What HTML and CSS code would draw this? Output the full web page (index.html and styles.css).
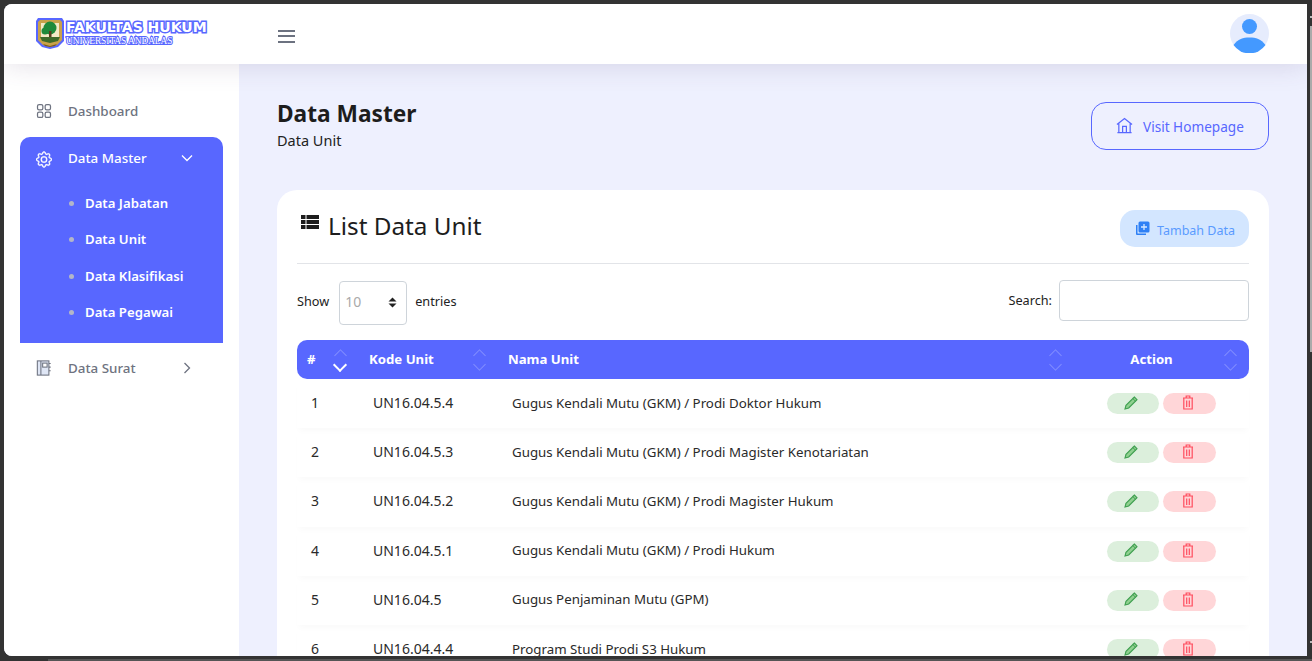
FILE: index.html
```html
<!DOCTYPE html>
<html lang="en">
<head>
    <meta charset="UTF-8">
    <meta name="viewport" content="width=device-width, initial-scale=1.0">
    <title>Data Unit</title>
    <link rel="stylesheet" href="styles.css">
</head>
<body>
    <div class="window">
        <header class="topbar">
            <div class="logo">
                <svg class="emblem" width="30" height="34" viewBox="0 0 30 34">
                    <path d="M3 2h24l2 3v20l-6 6-8 2-8-2-6-6V5z" fill="#5867ff"/>
                    <path d="M5 4h20l2 2v18l-5 5-7 2-7-2-5-5V6z" fill="#c9a24a"/>
                    <path d="M6 7h18v15H6z" fill="#f3e9c6"/>
                    <circle cx="15" cy="12" r="6.5" fill="#1f8a3a"/>
                    <circle cx="10" cy="15" r="3.5" fill="#1f8a3a"/>
                    <rect x="14" y="15" width="2.5" height="7" fill="#5a3d1e"/>
                    <path d="M5 21h20l-2 4-8 2-8-2z" fill="#3f6b2a"/>
                    <path d="M8 28l7 2 7-2-2 2-5 1-5-1z" fill="#7a5a20"/>
                </svg>
                <div class="logo-text">
                    <span class="logo-title">FAKULTAS HUKUM</span>
                    <span class="logo-sub">UNIVERSITAS ANDALAS</span>
                </div>
            </div>
            <button class="burger" aria-label="menu"><span></span><span></span><span></span></button>
            <div class="avatar">
                <svg width="39" height="39" viewBox="0 0 39 39">
                    <circle cx="19.5" cy="19.5" r="19.5" fill="#e6ecfd"/>
                    <circle cx="19.5" cy="12.5" r="7.5" fill="#4499ff"/>
                    <path d="M3.5 31C8 25 13 23.500 19.500 23.500S31 25 35.500 31A19.500 19.500 0 0 1 3.500 31z" fill="#4499ff"/>
                </svg>
            </div>
        </header>
        <div class="body-row">
            <aside class="sidebar">
                <a class="nav-item">
                    <svg class="nav-icon" width="18" height="18" viewBox="0 0 18 18" fill="none" stroke="#6e7380" stroke-width="1.4">
                        <rect x="1.700" y="1.700" width="6" height="6" rx="1.800"/><rect x="10.300" y="1.700" width="6" height="6" rx="1.800"/>
                        <rect x="1.700" y="10.300" width="6" height="6" rx="1.800"/><rect x="10.300" y="10.300" width="6" height="6" rx="1.800"/>
                    </svg>
                    <span>Dashboard</span>
                </a>
                <div class="nav-group">
                    <a class="nav-item active">
                        <svg class="nav-icon gear" width="17" height="17" viewBox="0 0 16 16" fill="#fff" stroke="#fff" stroke-width="0.35">
                            <path d="M8 4.754a3.246 3.246 0 1 0 0 6.492 3.246 3.246 0 0 0 0-6.492zM5.754 8a2.246 2.246 0 1 1 4.492 0 2.246 2.246 0 0 1-4.492 0z"/>
                            <path d="M9.796 1.343c-.527-1.790-3.065-1.790-3.592 0l-.094.319a.873.873 0 0 1-1.255.52l-.292-.16c-1.640-.892-3.433.902-2.540 2.541l.159.292a.873.873 0 0 1-.52 1.255l-.319.094c-1.790.527-1.790 3.065 0 3.592l.319.094a.873.873 0 0 1 .52 1.255l-.16.292c-.892 1.640.901 3.434 2.541 2.540l.292-.159a.873.873 0 0 1 1.255.52l.094.319c.527 1.790 3.065 1.790 3.592 0l.094-.319a.873.873 0 0 1 1.255-.52l.292.16c1.640.893 3.434-.902 2.540-2.541l-.159-.292a.873.873 0 0 1 .52-1.255l.319-.094c1.790-.527 1.790-3.065 0-3.592l-.319-.094a.873.873 0 0 1-.52-1.255l.16-.292c.893-1.640-.902-3.433-2.541-2.540l-.292.159a.873.873 0 0 1-1.255-.52l-.094-.319zm-2.633.283c.246-.835 1.428-.835 1.674 0l.094.319a1.873 1.873 0 0 0 2.693 1.115l.291-.16c.764-.415 1.600.42 1.184 1.185l-.159.292a1.873 1.873 0 0 0 1.116 2.692l.318.094c.835.246.835 1.428 0 1.674l-.319.094a1.873 1.873 0 0 0-1.115 2.693l.16.291c.415.764-.42 1.600-1.185 1.184l-.291-.159a1.873 1.873 0 0 0-2.693 1.116l-.094.318c-.246.835-1.428.835-1.674 0l-.094-.319a1.873 1.873 0 0 0-2.692-1.115l-.292.16c-.764.415-1.600-.42-1.184-1.185l.159-.291A1.873 1.873 0 0 0 1.945 8.930l-.319-.094c-.835-.246-.835-1.428 0-1.674l.319-.094A1.873 1.873 0 0 0 3.060 4.377l-.16-.292c-.415-.764.42-1.600 1.185-1.184l.292.159a1.873 1.873 0 0 0 2.692-1.115l.094-.319z"/>
                        </svg>
                        <span>Data Master</span>
                        <svg class="chev" width="14" height="14" viewBox="0 0 14 14" fill="none" stroke="#fff" stroke-width="1.300"><path d="M2 4.500l5 5 5-5"/></svg>
                    </a>
                    <ul class="sub-nav">
                        <li>Data Jabatan</li>
                        <li>Data Unit</li>
                        <li>Data Klasifikasi</li>
                        <li>Data Pegawai</li>
                    </ul>
                </div>
                <a class="nav-item">
                    <svg class="nav-icon" width="18" height="18" viewBox="0 0 18 18" fill="none" stroke="#6e7380" stroke-width="1.200">
                        <rect x="1.500" y="1" width="13" height="16" fill="#dfe6f5"/>
                        <path d="M5.500 1v16" stroke="#6e7380"/>
                        <rect x="7.500" y="3.500" width="5" height="4.500" fill="#fff"/>
                        <path d="M14.500 4h2M14.500 8h2M14.500 12h2"/>
                    </svg>
                    <span>Data Surat</span>
                    <svg class="chev" width="14" height="14" viewBox="0 0 14 14" fill="none" stroke="#6e7380" stroke-width="1.300"><path d="M4.500 2l5 5-5 5"/></svg>
                </a>
            </aside>
            <main class="content">
                <div class="page-head">
                    <div>
                        <h1>Data Master</h1>
                        <p>Data Unit</p>
                    </div>
                    <a class="btn-outline">
                        <svg width="17" height="17" viewBox="0 0 18 18" fill="none" stroke="#5867ff" stroke-width="1.300">
                            <path d="M1 8L9 1.500 17 8M3 6.500V16.500h12V6.500M7 16.500v-6.500h4v6.500M1.500 16.500h15"/>
                        </svg>
                        Visit Homepage
                    </a>
                </div>
                <section class="card">
                    <div class="card-head">
                        <h2>
                            <svg width="18" height="15" viewBox="0 0 18 15" fill="#1d1d1d">
                                <rect x="0" y="0" width="4.500" height="4"/><rect x="5.500" y="0" width="12.500" height="4"/>
                                <rect x="0" y="5" width="4.500" height="4"/><rect x="5.500" y="5" width="12.500" height="4"/>
                                <rect x="0" y="10" width="4.500" height="4"/><rect x="5.500" y="10" width="12.500" height="4"/>
                            </svg>
                            List Data Unit
                        </h2>
                        <a class="btn-soft">
                            <svg width="15" height="15" viewBox="0 0 15 15">
                                <path d="M1 4v9a1 1 0 0 0 1 1h9v-1.500H2.500V4z" fill="#2f80f5"/>
                                <rect x="3.500" y="0.500" width="11" height="11" rx="1.500" fill="#2f80f5"/>
                                <path d="M9 3v6M6 6h6" stroke="#d3e6ff" stroke-width="1.300"/>
                            </svg>
                            Tambah Data
                        </a>
                    </div>
                    <div class="table-tools">
                        <label class="entries"><span class="tool-label">Show</span>
                            <span class="fake-select"><span class="select-value">10</span>
                                <svg width="9" height="11" viewBox="0 0 9 11" fill="#222"><path d="M4.500 0.500L8.500 4.500H0.500zM4.500 10.500L0.500 6.500H8.500z"/></svg>
                            </span>
                            <span class="tool-label">entries</span>
                        </label>
                        <label class="search"><span class="tool-label">Search:</span> <input type="text"></label>
                    </div>
                    <table class="data-table">
                        <colgroup>
                            <col class="col-no"><col class="col-kode"><col><col class="col-action">
                        </colgroup>
                        <thead>
                            <tr>
                                <th class="sort sort-down">#</th>
                                <th class="sort">Kode Unit</th>
                                <th class="sort">Nama Unit</th>
                                <th class="sort th-action">Action</th>
                            </tr>
                        </thead>
                        <tbody id="rows"></tbody>
                    </table>
                </section>
            </main>
        </div>
    </div>
    <script>
        const units = [
            ["UN16.04.5.4", "Gugus Kendali Mutu (GKM) / Prodi Doktor Hukum"],
            ["UN16.04.5.3", "Gugus Kendali Mutu (GKM) / Prodi Magister Kenotariatan"],
            ["UN16.04.5.2", "Gugus Kendali Mutu (GKM) / Prodi Magister Hukum"],
            ["UN16.04.5.1", "Gugus Kendali Mutu (GKM) / Prodi Hukum"],
            ["UN16.04.5", "Gugus Penjaminan Mutu (GPM)"],
            ["UN16.04.4.4", "Program Studi Prodi S3 Hukum"]
        ];

        const pencil = '<svg width="14" height="14" viewBox="0 0 14 14"><path d="M10.300 1l2.700 2.700-8.300 8.300-3.700 1 1-3.700z" fill="#8fd08f" stroke="#3f9f50" stroke-width="1.100"/><path d="M8.800 2.500l2.700 2.700" stroke="#3f9f50" stroke-width="1"/></svg>';
        const trash = '<svg width="12" height="15" viewBox="0 0 12 15" fill="none" stroke="#ff4d5e" stroke-width="1.200"><path d="M1 3h10M4.200 3V1h3.600v2M1.800 3v11h8.400V3M4.700 5.500v6.500M7.300 5.500v6.500"/></svg>';

        document.getElementById("rows").innerHTML = units.map((u, i) =>
            `<tr><td class="td-no">${i + 1}</td><td class="td-kode">${u[0]}</td><td>${u[1]}</td>` +
            `<td class="td-action"><a class="btn-edit">${pencil}</a><a class="btn-del">${trash}</a></td></tr>`
        ).join("");
    </script>
</body>
</html>
```

FILE: styles.css
```css
* {
    box-sizing: border-box;
}
html, body {
    height: 100%;
}
body {
    margin: 0;
    padding: 4px 5px 5px 4px;
    background: #333;
    overflow: hidden;
    font-family: "Noto Sans", "Open Sans", sans-serif;
    font-size: 13.300px;
    color: #222;
}
/* slivers of the window behind: its scrollbar and bottom edge */
body::before {
    content: "";
    position: absolute;
    top: 16px;
    right: 0;
    width: 2px;
    height: 627px;
    background: linear-gradient(#bbb 0 2px, transparent 2px 10px, #aaa 10px 336px, transparent 336px 625px, #bbb 625px);
}
body::after {
    content: "";
    position: absolute;
    left: 48px;
    right: 0;
    bottom: 0;
    height: 2px;
    background: #555;
}
a {
    text-decoration: none;
}
.window {
    height: 100%;
    display: flex;
    flex-direction: column;
    overflow: hidden;
    border-radius: 8px 0 0 8px;
    background: #eef0fe;
}

/* top bar */
.topbar {
    flex: 0 0 60px;
    display: flex;
    align-items: center;
    padding: 0 38px 0 31px;
    background: #fff;
    box-shadow: 0 0 28px rgba(82, 63, 105, 0.18);
    position: relative;
    z-index: 2;
}
.logo {
    display: flex;
    align-items: center;
    gap: 1px;
    width: 243px;
    margin-top: -2px;
}
.logo-text {
    display: flex;
    flex-direction: column;
}
.logo-title {
    font-family: "DejaVu Sans", sans-serif;
    font-size: 14px;
    font-weight: bold;
    line-height: 17px;
    color: #fff;
    -webkit-text-stroke: 3px #5867ff;
    paint-order: stroke fill;
}
.logo-sub {
    font-family: "Liberation Serif", serif;
    font-size: 9.300px;
    line-height: 11px;
    color: #fff;
    -webkit-text-stroke: 2px #5867ff;
    paint-order: stroke fill;
}
.burger {
    display: flex;
    flex-direction: column;
    gap: 3.500px;
    margin-top: 4px;
    padding: 0;
    width: 17px;
    background: none;
    border: none;
}
.burger span {
    height: 2px;
    background: #6c7280;
}
.avatar {
    margin-left: auto;
    height: 39px;
    margin-top: -1px;
}

.body-row {
    flex: 1;
    display: flex;
    min-height: 0;
}

/* sidebar */
.sidebar {
    width: 235px;
    flex-shrink: 0;
    padding: 26px 16px 0;
    background: #fff;
}
.nav-item {
    display: flex;
    align-items: center;
    height: 42px;
    padding: 0 16px;
    color: #6e7380;
    font-weight: 500;
    font-size: 13.400px;
}
.nav-item span {
    margin-bottom: 1px;
}
.nav-icon {
    width: 16px;
    margin-right: 16px;
    flex-shrink: 0;
}
.nav-icon.gear {
    margin-top: 3px;
}
.chev {
    margin-left: auto;
    margin-right: 13px;
}
.nav-group {
    height: 206px;
    margin: 5px 0 4px;
    border-radius: 10px 10px 0 0;
    background: #5867ff;
}
.nav-item.active {
    color: #fff;
}
.sub-nav {
    list-style: none;
    margin: 6px 0 0;
    padding: 0 0 0 65px;
    color: #fff;
    font-weight: 600;
    font-size: 13.200px;
}
.sub-nav li {
    position: relative;
    height: 36.400px;
    line-height: 36.400px;
}
.sub-nav li::before {
    content: "";
    position: absolute;
    left: -16px;
    top: 16px;
    width: 5px;
    height: 5px;
    border-radius: 50%;
    background: #b3b6c8;
}

/* main */
.content {
    flex: 1;
    min-width: 0;
    padding: 38px 38px 0;
}
.page-head {
    display: flex;
    justify-content: space-between;
    align-items: flex-start;
    margin-bottom: 40px;
}
.page-head h1 {
    margin: 0;
    font-size: 22.700px;
    line-height: 24px;
    font-weight: 700;
    color: #1d1d1d;
}
.page-head p {
    margin: 4px 0 0;
    font-size: 14.500px;
    line-height: 20px;
}
.btn-outline {
    display: flex;
    align-items: center;
    gap: 10px;
    width: 178px;
    height: 48px;
    padding-left: 24px;
    border: 1px solid #5867ff;
    border-radius: 15px;
    color: #5867ff;
    font-size: 13.600px;
}
.btn-outline svg {
    margin-top: -1px;
}
.card {
    padding: 20px;
    background: #fff;
    border-radius: 20px;
    height: 600px;
}
.card-head {
    display: flex;
    justify-content: space-between;
    align-items: flex-start;
    height: 54px;
    border-bottom: 1px solid #e2e4e8;
}
.card-head h2 {
    display: flex;
    align-items: flex-start;
    gap: 9px;
    margin: 0;
    font-size: 24.300px;
    line-height: 32px;
    font-weight: 400;
    color: #1d1d1d;
}
.card-head h2 svg {
    margin: 5px 0 0 4px;
}
.btn-soft {
    display: flex;
    align-items: center;
    gap: 7px;
    width: 129px;
    height: 37px;
    padding: 3px 0 0 15px;
    border-radius: 15px;
    background: #d3e6ff;
    color: #5a9bff;
    font-size: 12.500px;
}
.btn-soft svg {
    margin-top: -4px;
}
.table-tools {
    display: flex;
    justify-content: space-between;
    align-items: center;
    margin: 16px 0 15px;
    height: 45px;
    font-size: 12.700px;
}
.tool-label {
    margin-top: -3px;
}
.entries, .search {
    display: flex;
    align-items: center;
    gap: 9px;
}
.fake-select {
    display: flex;
    justify-content: space-between;
    align-items: center;
    width: 68px;
    height: 44px;
    margin: 0 -1px 0 1px;
    padding: 0 9px 0 5px;
    border: 1px solid #ced4da;
    border-radius: 4px;
    color: #aaa;
    font-size: 14px;
}
.select-value {
    margin-top: -2px;
}
.search {
    gap: 7px;
    margin-top: -4px;
}
.search .tool-label {
    margin-top: -2px;
}
.search input {
    width: 190px;
    height: 41px;
    border: 1px solid #ced4da;
    border-radius: 4px;
    background: #fff;
}

/* table */
.data-table {
    width: 100%;
    border-collapse: separate;
    border-spacing: 0;
    table-layout: fixed;
}
.col-no {
    width: 62px;
}
.col-kode {
    width: 139px;
}
.col-action {
    width: 175px;
}
.data-table th {
    position: relative;
    height: 39px;
    padding: 0 10px 2px;
    background: #5867ff;
    color: #fff;
    font-size: 13.200px;
    font-weight: 700;
    text-align: left;
}
.data-table th:first-child {
    border-radius: 10px 0 0 10px;
}
.data-table th:last-child {
    border-radius: 0 10px 10px 0;
}
.data-table th.th-action {
    padding-right: 30px;
    text-align: center;
}
/* sort carets drawn over the header cell */
.sort::before, .sort::after {
    content: "";
    position: absolute;
    right: 14px;
    width: 8px;
    height: 8px;
    border-left: 1.500px solid rgba(255, 255, 255, 0.25);
    border-top: 1.500px solid rgba(255, 255, 255, 0.25);
}
.sort::before {
    top: 11px;
    transform: rotate(45deg);
}
.sort::after {
    top: 20px;
    transform: rotate(225deg);
}
.sort-down::after {
    border-width: 2px;
    border-color: #fff;
}
.data-table tbody tr {
    box-shadow: 0 5px 6px -2px rgba(0, 0, 0, 0.025);
}
.data-table td {
    height: 49.200px;
    padding: 0 14px 2px;
    font-size: 13.300px;
    color: #2a2a2a;
}
.data-table .td-no, .data-table .td-kode {
    font-size: 14px;
}
.data-table .td-action {
    padding: 0;
    text-align: center;
    white-space: nowrap;
}
.btn-edit, .btn-del {
    display: inline-flex;
    justify-content: center;
    align-items: center;
    width: 52px;
    height: 21px;
    padding: 0 4px 2px 0;
    border-radius: 11px;
    vertical-align: middle;
}
.btn-edit {
    background: #dcefdc;
}
.btn-del {
    width: 53px;
    margin-left: 4px;
    background: #ffd6d8;
}
```
